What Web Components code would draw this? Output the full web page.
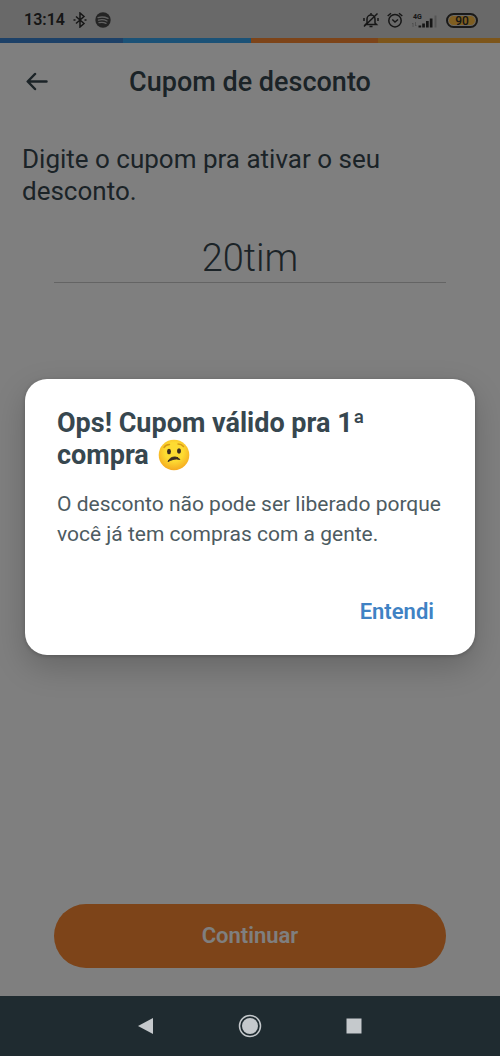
<!DOCTYPE html>
<html lang="pt-BR">
<head>
<meta charset="utf-8">
<meta name="viewport" content="width=device-width, initial-scale=1">
<title>Cupom de desconto</title>
<style>
  html, body { margin: 0; height: 100%; }
  body { font-family: Roboto, "Noto Sans", sans-serif; color: #37474f; background: #fff; }
</style>
</head>
<body>
<phone-screen>
  <status-bar slot="status" time="13:14" battery="90"></status-bar>
  <brand-stripe slot="status"></brand-stripe>
  <page-header>Cupom de desconto</page-header>
  <coupon-form value="20tim">
    <span slot="label">Digite o cupom pra ativar o seu desconto.</span>
    <span slot="action">Continuar</span>
  </coupon-form>
  <alert-dialog slot="overlay">
    <span slot="title">Ops! Cupom válido pra 1ª compra <worried-face></worried-face></span>
    <span slot="body">O desconto não pode ser liberado porque você já tem compras com a gente.</span>
    <span slot="action">Entendi</span>
  </alert-dialog>
  <system-nav slot="nav"></system-nav>
</phone-screen>

<script>
const define = (name, render) => customElements.define(name, class extends HTMLElement {
  constructor() {
    super();
    this.attachShadow({ mode: "open" });
  }
  connectedCallback() {
    this.shadowRoot.innerHTML = render(this);
  }
});

define("phone-screen", () => `
  <style>
    :host { display: flex; flex-direction: column; min-height: 100vh; }
    .app { position: relative; flex: 1; display: flex; flex-direction: column; }
    main { flex: 1; display: flex; flex-direction: column; }
  </style>
  <div class="app">
    <slot name="status"></slot>
    <main><slot></slot></main>
    <slot name="overlay"></slot>
  </div>
  <slot name="nav"></slot>`);

define("status-bar", el => `
  <style>
    :host { display: flex; align-items: center; justify-content: space-between; height: 38px;
      padding: 2px 22px 0 24px; box-sizing: border-box; background: #d2d2d2; color: #2c2c2c; }
    .group { display: flex; align-items: center; gap: 8px; }
    time { font-size: 16px; font-weight: 600; line-height: 20px; }
    svg { display: block; }
    .battery { box-sizing: border-box; width: 32px; height: 15px; border: 2px solid #333; border-radius: 8px;
      background: #ffbd42; box-shadow: inset 0 0 0 1px #d2d2d2; font-size: 12px; line-height: 12px; font-weight: 500; text-align: center; }
  </style>
  <div class="group">
    <time>${el.getAttribute("time")}</time>
    <svg width="14" height="16" viewBox="0 0 14 16" fill="none" stroke="currentColor" stroke-width="1.5" aria-label="Bluetooth">
      <path d="M3 4.5l8 7-4 3.5V1l4 3.500-8 7"/><path d="M0.500 8h2M11.500 8h2"/>
    </svg>
    <svg width="16" height="16" viewBox="0 0 16 16" aria-label="Spotify">
      <circle cx="8" cy="8" r="7.700" fill="#484848"/>
      <path d="M3 5.600q5-1.500 10 .8M3.500 8.200q4.500-1.300 8.500.8M4 10.700q4-1 7 .7" fill="none" stroke="#c4c4c4" stroke-width="1.300" stroke-linecap="round"/>
    </svg>
  </div>
  <div class="group">
    <svg width="16" height="16" viewBox="0 0 16 16" fill="none" stroke="currentColor" stroke-width="1.500" aria-label="Silencioso">
      <path d="M4 11V7a4 4 0 0 1 8 0v4l1.500 1.500H2.500L4 11M6.500 14.500h3M8 1v2M1 14.500L14.500 1.500M1 6v3M15 6v3"/>
    </svg>
    <svg width="16" height="16" viewBox="0 0 16 16" fill="none" stroke="currentColor" stroke-width="1.500" aria-label="Alarme">
      <circle cx="8" cy="8.700" r="6.200"/><path d="M5.300 7.500L8 10l3-2.500M.7 4L4 1.200M15.300 4L12 1.200"/>
    </svg>
    <svg width="27" height="17" viewBox="0 0 27 17" fill="currentColor" aria-label="Sinal 4G">
      <text x="2" y="7" font-size="7" font-weight="700">4G</text>
      <path d="M2 15v-4l-1 1M4.500 10v4l1-1" fill="none" stroke="#999" stroke-width=".8"/>
      <path d="M7.500 13.500h2.700v2H7.500zM11.200 11.500h2.700v4h-2.700zM15 9h2.700v6.500H15zM18.800 6.500h2.700v9h-2.700z"/>
      <path d="M23.500 3.500h2v12h-2z" fill="#aaa"/>
    </svg>
    <div class="battery">${el.getAttribute("battery")}</div>
  </div>`);

define("brand-stripe", () => `
  <style>
    :host { display: grid; grid-template-columns: 123fr 128fr 127fr 122fr; height: 5px; }
    i:nth-of-type(1) { background: #3a82d0; }
    i:nth-of-type(2) { background: #36a4ef; }
    i:nth-of-type(3) { background: #fa8832; }
    i:nth-of-type(4) { background: #fbac37; }
  </style>
  <i></i><i></i><i></i><i></i>`);

define("page-header", () => `
  <style>
    :host { display: grid; grid-template-columns: 48px 1fr 48px; align-items: center; height: 78px; padding: 0 13px; }
    button { display: flex; align-items: center; justify-content: center; height: 48px; padding: 0; border: 0;
      background: none; color: inherit; }
    h1 { margin: 0; font-size: 27px; line-height: 32px; font-weight: 500; text-align: center; }
  </style>
  <button type="button" aria-label="Voltar">
    <svg width="22" height="20" viewBox="0 0 22 20" fill="none" stroke="currentColor" stroke-width="2.500" stroke-linecap="round" stroke-linejoin="round">
      <path d="M20.500 9.500H2M9 2L1.700 9.500 9 17"/>
    </svg>
  </button>
  <h1><slot></slot></h1>`);

define("coupon-form", el => `
  <style>
    :host { flex: 1; display: flex; }
    form { flex: 1; min-width: 0; display: flex; flex-direction: column; padding: 22px 22px 28px; }
    label { font-size: 26px; line-height: 32px; }
    input { margin: 26px 32px 0; height: 50px; box-sizing: border-box; padding: 0; border: 0; border-bottom: 1px solid #c8c8c8; outline: 0;
      background: none; color: inherit; font: 300 38px/48px Roboto, sans-serif; text-align: center; min-width: 0; }
    button { margin: auto 32px 0; height: 64px; border: 0; border-radius: 32px; background: #fa8832; color: #fff;
      font: 600 22px/28px Roboto, sans-serif; }
  </style>
  <form>
    <label for="coupon"><slot name="label"></slot></label>
    <input id="coupon" type="text" value="${el.getAttribute("value")}">
    <button type="button"><slot name="action"></slot></button>
  </form>`);

define("alert-dialog", () => `
  <style>
    :host { position: absolute; inset: 0; display: flex; align-items: center; padding: 38px 25px 0; background: rgba(0,0,0,.5); }
    section { flex: 1; display: flex; flex-direction: column; box-sizing: border-box; padding: 28px 32px 20px;
      border-radius: 22px; background: #fff; box-shadow: 0 12px 32px rgba(0,0,0,.2), 0 1px 4px rgba(0,0,0,.2); }
    h2 { margin: 0; font-size: 27px; line-height: 32px; font-weight: 700; }
    p { margin: 18px 0 40px; font-size: 21px; line-height: 30px; color: #4d5b61; }
    button { align-self: flex-end; height: 46px; padding: 0 9px; border: 0; background: none; color: #3f82c4;
      font: 600 22px/28px Roboto, sans-serif; }
  </style>
  <section role="alertdialog" aria-labelledby="title" aria-describedby="body">
    <h2 id="title"><slot name="title"></slot></h2>
    <p id="body"><slot name="body"></slot></p>
    <button type="button"><slot name="action"></slot></button>
  </section>`);

define("worried-face", () => `
  <style>
    :host { display: inline-block; vertical-align: bottom; margin-left: 2px; }
    svg { display: block; }
  </style>
  <svg width="32" height="32" viewBox="0 0 32 32" role="img" aria-label="rosto confuso">
    <defs><radialGradient id="skin" cx=".5" cy=".4" r=".6">
      <stop offset=".5" stop-color="#fddb32"/><stop offset="1" stop-color="#f5aa20"/>
    </radialGradient></defs>
    <circle cx="16" cy="16" r="15.300" fill="url(#skin)"/>
    <path d="M6 8.500q2-3 5.500-3M20 5q3.500 0 5.500 2.500" fill="none" stroke="#d69a17" stroke-width="1.400" stroke-linecap="round"/>
    <ellipse cx="11" cy="12.500" rx="2" ry="2.700" fill="#3a2b20"/>
    <ellipse cx="21" cy="12" rx="2" ry="2.700" fill="#3a2b20"/>
    <path d="M10 22.500q2-4.500 7-4.500 3.500 0 4.800 2.500-3-1-5.800-.3-3.500 1-6 2.300z" fill="#3a2b20" stroke="#3a2b20" stroke-linejoin="round"/>
  </svg>`);

define("system-nav", () => `
  <style>
    :host { display: grid; grid-template-columns: 1fr 104px 104px 104px 1fr; align-items: center; height: 60px; background: #1f2b30; }
    button { display: flex; align-items: center; justify-content: center; height: 48px; padding: 0; border: 0; background: none; color: #c5c9cc; }
    button:first-of-type { grid-column: 2; }
  </style>
  <button type="button" aria-label="Voltar"><svg width="16" height="18" viewBox="0 0 16 18"><path d="M0 9L15 1v16z" fill="currentColor"/></svg></button>
  <button type="button" aria-label="Início"><svg width="24" height="24" viewBox="0 0 24 24"><circle cx="12" cy="12" r="10.500" fill="none" stroke="currentColor" stroke-width="1.500"/><circle cx="12" cy="12" r="8" fill="currentColor"/></svg></button>
  <button type="button" aria-label="Recentes"><svg width="16" height="16" viewBox="0 0 16 16"><path d="M.5.5h15v15H.5z" fill="currentColor"/></svg></button>`);
</script>
</body>
</html>
